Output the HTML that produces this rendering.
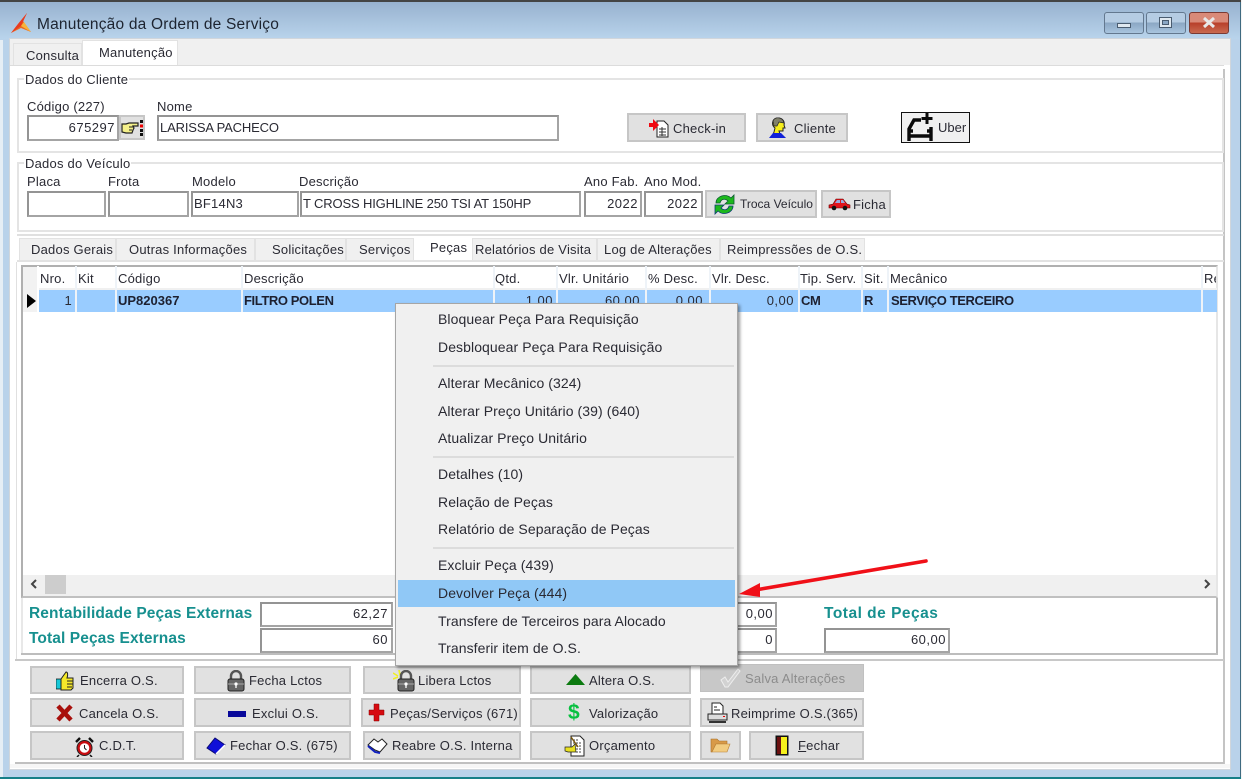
<!DOCTYPE html>
<html lang="pt"><head><meta charset="utf-8"><title>Manutenção da Ordem de Serviço</title>
<style>
html,body{margin:0;padding:0;width:1242px;height:779px;overflow:hidden;background:#fff}
#r{position:absolute;left:0;top:0;width:1242px;height:779px;overflow:hidden;font:13px/18px "Liberation Sans",sans-serif;color:#2a2a33;letter-spacing:.22px;filter:blur(.35px);background:#b9d2ea}
#r div,#r span,#r svg{position:absolute}
.t{white-space:nowrap}
.x{background:#e1e1e1;border:2px solid #c6c6c6;box-sizing:border-box}
.i{background:#fff;border:2px solid #949494;box-sizing:border-box;border-right-color:#a4a4a4;border-bottom-color:#a4a4a4}
.g{background:#fff;border:2px solid #e4e4e4;box-sizing:border-box}
.tb{background:#f0f0f0;border:1px solid #e2e2e2;border-bottom:0;box-sizing:border-box}
.h{background:#fff;width:2px;top:266px;height:46px}
#r .bd{font-weight:bold;letter-spacing:-.4px;color:#1d2030}
#r .tl{font-weight:bold;color:#17908f;font-size:15.5px;letter-spacing:.1px;line-height:16px}
#r .u{letter-spacing:-.15px}
#r .n{letter-spacing:.5px}
#r .m{left:438px;white-space:nowrap;font-size:14px;line-height:16px;letter-spacing:.08px}
.sep{left:433px;width:301px;height:2px;background:#dcdcdc}
</style></head><body><div id="r">

<div style="left:0;top:0;width:1242px;height:2px;background:#444"></div>
<div style="left:0;top:2px;width:1242px;height:37px;background:linear-gradient(#98b2cf,#b9d4ec)"></div>
<div style="left:0;top:40px;width:3px;height:737px;background:#e6eef5"></div>
<div style="left:1240px;top:2px;width:1px;height:775px;background:#3f6a80"></div>
<div style="left:1241px;top:0;width:1px;height:779px;background:#f4f4f4"></div>
<div style="left:0;top:777px;width:1241px;height:2px;background:#157f88"></div>
<div style="left:9px;top:38px;width:1222px;height:732px;background:#fff;border:1px solid #d0d6dc;box-sizing:border-box"></div>
<svg style="left:10px;top:12px" width="23" height="22" viewBox="0 0 23 22"><path d="M17 1 L13 9 L21 20 L11 16 L1 21 L8 12 Z" fill="#ee6a1c"/><path d="M17 1 L8 12 L1 21 L11 14 Z" fill="#e83a20"/><path d="M11 14 L21 20 L14 10Z" fill="#f6b43c"/></svg>
<span class="t" style="left:37px;top:16px;font-size:15.5px;color:#1d2430;letter-spacing:.2px">Manutenção da Ordem de Serviço</span>

<div style="left:1104px;top:12px;width:40px;height:22px;background:linear-gradient(#b5cce3 45%,#8ba7c4 50%,#a8c4de);border:1px solid #63788f;border-radius:3px;box-sizing:border-box"></div>
<div style="left:1117px;top:23px;width:14px;height:5px;background:#dfe8f0;border:1px solid #4a5c70;box-sizing:border-box"></div>
<div style="left:1146px;top:12px;width:40px;height:22px;background:linear-gradient(#b5cce3 45%,#8ba7c4 50%,#a8c4de);border:1px solid #63788f;border-radius:3px;box-sizing:border-box"></div>
<div style="left:1159px;top:17px;width:13px;height:11px;background:#dfe8f0;border:1px solid #4a5c70;box-sizing:border-box"></div>
<div style="left:1162px;top:20px;width:7px;height:5px;background:#8ba7c4;border:1px solid #4a5c70;box-sizing:border-box"></div>
<div style="left:1189px;top:12px;width:40px;height:22px;background:linear-gradient(#d98a78 45%,#b8402a 50%,#c96a50);border:1px solid #7a3a33;border-radius:3px;box-sizing:border-box"></div>
<svg style="left:1201px;top:15px" width="16" height="15" viewBox="0 0 16 15"><path d="M3 3 L13 12 M13 3 L3 12" stroke="#e8e8e8" stroke-width="3"/></svg>

<div style="left:10px;top:39px;width:1220px;height:26px;background:#f0f0f0"></div>
<div class="tb" style="left:13px;top:43px;width:69px;height:23px"></div>
<div style="left:82px;top:40px;width:96px;height:26px;background:#fff;border:1px solid #e2e2e2;border-bottom:0;box-sizing:border-box"></div>
<span class="t" style="left:26px;top:47px">Consulta</span>
<span class="t" style="left:99px;top:44px">Manutenção</span>
<div style="left:10px;top:65px;width:1214px;height:1px;background:#dcdcdc"></div>
<div style="left:1223px;top:69px;width:2px;height:696px;background:#c4c4c4"></div>
<div style="left:16px;top:262px;width:1px;height:398px;background:#e0e0e0"></div>

<div class="g" style="left:17px;top:78px;width:1207px;height:75px"></div>
<span class="t" style="left:24px;top:71px;background:#fff;padding:0 1px">Dados do Cliente</span>
<span class="t" style="left:27px;top:98px">Código (227)</span>
<span class="t" style="left:157px;top:98px">Nome</span>
<div class="i" style="left:27px;top:115px;width:92px;height:26px"></div>
<span class="t n" style="right:1127px;top:119px">675297</span>
<div class="x" style="left:119px;top:115px;width:26px;height:25px"></div>
<svg style="left:121px;top:117px" width="24" height="22" viewBox="0 0 24 22"><path d="M1 7 H5 L8 6 H17 V9 H12 L13 11 L12 13 L11 16 H5 L1 15 Z" fill="#f4f08a" stroke="#222" stroke-width="1.2"/><path d="M8 10h4M8 13h3" stroke="#222"/><path d="M19 3h3v3h-3zM19 12h3v3h-3zM19 16h3v3h-3z" fill="#111"/><path d="M19 7.500h3v3h-3z" fill="#e00"/></svg>
<div class="i" style="left:157px;top:115px;width:402px;height:26px"></div>
<span class="t u" style="left:160px;top:119px">LARISSA PACHECO</span>

<div class="x" style="left:627px;top:113px;width:119px;height:29px"></div>
<svg style="left:648px;top:117px" width="22" height="22" viewBox="0 0 22 22"><path d="M9 4h7l4 4v12H9z" fill="#fff" stroke="#222"/><path d="M11 12h7M11 15h7M11 18h7M14 10v9" stroke="#333"/><path d="M1 6h4V2l6 6-6 6v-4H1z" fill="#ef0a12"/></svg>
<span class="t" style="left:673px;top:120px">Check-in</span>
<div class="x" style="left:756px;top:113px;width:92px;height:29px"></div>
<svg style="left:768px;top:116px" width="20" height="23" viewBox="0 0 20 23"><path d="M4 21 L6 16 L7 12 C3 9 4 2 10 2 C15 2 17 6 16 9 L17 12 H15 V15 H11 L12 18 L16 21Z" fill="#f6ee1c" stroke="#222"/><path d="M1 22 L5 17 H13 L18 22Z" fill="#1020d8"/><path d="M5 5 C7 0 15 1 16 7 L11 6 L9 10 L6 10Z" fill="#80806a" stroke="#222" stroke-width=".7"/></svg>
<span class="t" style="left:794px;top:120px">Cliente</span>
<div style="left:901px;top:112px;width:69px;height:31px;background:#f0f0f0;border:1px solid #111;box-sizing:border-box"></div>
<svg style="left:904px;top:112px" width="32" height="31" viewBox="0 0 32 31"><path d="M23 1V12M17.500 6.500H28.500" stroke="#0a0a0a" stroke-width="3"/><path d="M17 8H10L5 17V29M5 24H27M27 15V29M5 19H9M27 19H23" stroke="#0a0a0a" stroke-width="3.4" fill="none"/></svg>
<span class="t" style="left:938px;top:119px;font-size:13px;letter-spacing:0">Uber</span>

<div class="g" style="left:17px;top:162px;width:1207px;height:70px"></div>
<span class="t" style="left:24px;top:155px;background:#fff;padding:0 1px">Dados do Veículo</span>
<span class="t" style="left:27px;top:173px">Placa</span>
<span class="t" style="left:108px;top:173px">Frota</span>
<span class="t" style="left:192px;top:173px">Modelo</span>
<span class="t" style="left:299px;top:173px">Descrição</span>
<span class="t" style="left:584px;top:173px">Ano Fab.</span>
<span class="t" style="left:644px;top:173px">Ano Mod.</span>
<div class="i" style="left:27px;top:191px;width:79px;height:26px"></div>
<div class="i" style="left:108px;top:191px;width:81px;height:26px"></div>
<div class="i" style="left:191px;top:191px;width:108px;height:26px"></div>
<div class="i" style="left:300px;top:191px;width:281px;height:26px"></div>
<div class="i" style="left:584px;top:191px;width:58px;height:26px"></div>
<div class="i" style="left:644px;top:191px;width:59px;height:26px"></div>
<span class="t" style="left:194px;top:195px">BF14N3</span>
<span class="t u" style="left:303px;top:195px">T CROSS HIGHLINE 250 TSI AT 150HP</span>
<span class="t n" style="right:604px;top:195px">2022</span>
<span class="t n" style="right:544px;top:195px">2022</span>
<div class="x" style="left:705px;top:190px;width:112px;height:28px"></div>
<svg style="left:713px;top:193px" width="23" height="23" viewBox="0 0 23 23"><path d="M3 10 C3 3 13 0 18 5 L21 2 V11 H12 L15 8 C12 5 8 6 7 10Z" fill="#1cb81c" stroke="#0a5a30" stroke-width=".8"/><path d="M20 13 C20 20 10 23 5 18 L2 21 V12 H11 L8 15 C11 18 15 17 16 13Z" fill="#1cb81c" stroke="#0a3a70" stroke-width=".8"/></svg>
<span class="t" style="left:740px;top:195px;font-size:12px;letter-spacing:0">Troca Veículo</span>
<div class="x" style="left:821px;top:190px;width:70px;height:28px"></div>
<svg style="left:828px;top:197px" width="23" height="14" viewBox="0 0 23 14"><path d="M1 11 V8 L5 7 L8 2 H15 L19 7 L22 8 V11Z" fill="#e0141c" stroke="#600" stroke-width=".6"/><path d="M9 3h3v3H7zM13 3h2l2 3h-4z" fill="#9ad"/><circle cx="6" cy="11" r="2.3" fill="#111"/><circle cx="17" cy="11" r="2.3" fill="#111"/></svg>
<span class="t" style="left:853px;top:196px">Ficha</span>

<div style="left:17px;top:234px;width:1207px;height:2px;background:#e0e0e0"></div>
<div class="tb" style="left:19px;top:238px;width:97px;height:23px"></div>
<div class="tb" style="left:116px;top:238px;width:139px;height:23px"></div>
<div class="tb" style="left:255px;top:238px;width:91px;height:23px"></div>
<div class="tb" style="left:346px;top:238px;width:68px;height:23px"></div>
<div class="tb" style="left:472px;top:238px;width:125px;height:23px"></div>
<div class="tb" style="left:597px;top:238px;width:123px;height:23px"></div>
<div class="tb" style="left:720px;top:238px;width:145px;height:23px"></div>
<span class="t" style="left:31px;top:241px">Dados Gerais</span>
<span class="t" style="left:129px;top:241px">Outras Informações</span>
<span class="t" style="left:272px;top:241px">Solicitações</span>
<span class="t" style="left:359px;top:241px">Serviços</span>
<span class="t" style="left:430px;top:239px">Peças</span>
<span class="t" style="left:475px;top:241px">Relatórios de Visita</span>
<span class="t" style="left:604px;top:241px">Log de Alterações</span>
<span class="t" style="left:727px;top:241px">Reimpressões de O.S.</span>
<div style="left:17px;top:260px;width:1207px;height:2px;background:#e2e2e2"></div>

<div style="left:21px;top:265px;width:1197px;height:333px;background:#fff;border:2px solid #b0b0b0;border-right-color:#e6e6e6;border-bottom-color:#c0c0c0;box-sizing:border-box"></div>
<div style="left:23px;top:267px;width:15px;height:45px;background:#f2f2f2"></div>
<div style="left:38px;top:290px;width:1179px;height:22px;background:#99ccff"></div>
<div style="left:38px;top:288px;width:1179px;height:2px;background:#f0f0f0"></div>
<div class="h" style="left:37px"></div><div class="h" style="left:75px;background:#eef3f8"></div><div class="h" style="left:115px;background:#eef3f8"></div><div class="h" style="left:241px;background:#eef3f8"></div><div class="h" style="left:493px;background:#eef3f8"></div><div class="h" style="left:556px;background:#eef3f8"></div><div class="h" style="left:645px;background:#eef3f8"></div><div class="h" style="left:709px;background:#eef3f8"></div><div class="h" style="left:798px;background:#eef3f8"></div><div class="h" style="left:861px;background:#eef3f8"></div><div class="h" style="left:887px;background:#eef3f8"></div><div class="h" style="left:1201px;background:#eef3f8"></div>
<span class="t" style="left:40px;top:270px">Nro.</span>
<span class="t" style="left:78px;top:270px">Kit</span>
<span class="t" style="left:118px;top:270px">Código</span>
<span class="t" style="left:244px;top:270px">Descrição</span>
<span class="t" style="left:495px;top:270px">Qtd.</span>
<span class="t" style="left:559px;top:270px">Vlr. Unitário</span>
<span class="t" style="left:648px;top:270px">% Desc.</span>
<span class="t" style="left:712px;top:270px">Vlr. Desc.</span>
<span class="t" style="left:800px;top:270px">Tip. Serv.</span>
<span class="t" style="left:864px;top:270px">Sit.</span>
<span class="t" style="left:890px;top:270px">Mecânico</span>
<span class="t" style="left:1204px;top:270px;width:12px;overflow:hidden">Re</span>
<svg style="left:26px;top:293px" width="11" height="16"><path d="M1 1 L10 8 L1 15Z" fill="#000"/></svg>
<span class="t" style="right:1170px;top:292px">1</span>
<span class="t bd" style="left:118px;top:292px;letter-spacing:0">UP820367</span>
<span class="t bd" style="left:244px;top:292px">FILTRO POLEN</span>
<span class="t n" style="right:689px;top:292px">1,00</span>
<span class="t n" style="right:602px;top:292px">60,00</span>
<span class="t n" style="right:539px;top:292px">0,00</span>
<span class="t n" style="right:448px;top:292px">0,00</span>
<span class="t bd" style="left:801px;top:292px">CM</span>
<span class="t bd" style="left:864px;top:292px">R</span>
<span class="t bd" style="left:891px;top:292px">SERVIÇO TERCEIRO</span>

<div style="left:23px;top:575px;width:1193px;height:21px;background:#f0f0f0"></div>
<div style="left:45px;top:575px;width:21px;height:19px;background:#cdcdcd"></div>
<svg style="left:29px;top:578px" width="10" height="12"><path d="M7 2 L3 6 L7 10" fill="none" stroke="#444" stroke-width="2"/></svg>
<svg style="left:1202px;top:578px" width="10" height="12"><path d="M3 2 L7 6 L3 10" fill="none" stroke="#444" stroke-width="2"/></svg>

<div style="left:21px;top:598px;width:2px;height:56px;background:#e8e8e8"></div>
<div style="left:1216px;top:598px;width:2px;height:56px;background:#b8b8b8"></div>
<div style="left:21px;top:653px;width:1197px;height:2px;background:#bdbdbd"></div>
<span class="t tl" style="left:29px;top:606px">Rentabilidade Peças Externas</span>
<span class="t tl" style="left:29px;top:631px">Total Peças Externas</span>
<span class="t tl" style="left:824px;top:606px;letter-spacing:.5px">Total de Peças</span>
<div class="i" style="left:260px;top:602px;width:133px;height:25px"></div>
<span class="t n" style="right:854px;top:605px">62,27</span>
<div class="i" style="left:260px;top:628px;width:133px;height:25px"></div>
<span class="t n" style="right:854px;top:631px">60</span>
<div class="i" style="left:690px;top:602px;width:87px;height:25px"></div>
<span class="t n" style="right:469px;top:605px">0,00</span>
<div class="i" style="left:690px;top:628px;width:87px;height:25px"></div>
<span class="t n" style="right:469px;top:631px">0</span>
<div class="i" style="left:824px;top:628px;width:126px;height:25px"></div>
<span class="t n" style="right:296px;top:631px">60,00</span>

<div style="left:15px;top:659px;width:1209px;height:2px;background:#c8c8c8"></div>
<div style="left:15px;top:762px;width:1209px;height:2px;background:#c0c0c0"></div>
<div style="left:10px;top:764px;width:1220px;height:4px;background:#f6f6f6"></div>

<div class="x" style="left:30px;top:666px;width:154px;height:28px"></div>
<div class="x" style="left:30px;top:698px;width:154px;height:29px"></div>
<div class="x" style="left:30px;top:731px;width:154px;height:29px"></div>
<div class="x" style="left:194px;top:666px;width:157px;height:28px"></div>
<div class="x" style="left:194px;top:698px;width:157px;height:29px"></div>
<div class="x" style="left:194px;top:731px;width:157px;height:29px"></div>
<div class="x" style="left:363px;top:666px;width:158px;height:28px"></div>
<div class="x" style="left:361px;top:698px;width:160px;height:29px"></div>
<div class="x" style="left:363px;top:731px;width:158px;height:29px"></div>
<div class="x" style="left:530px;top:666px;width:161px;height:28px"></div>
<div class="x" style="left:530px;top:698px;width:161px;height:29px"></div>
<div class="x" style="left:530px;top:731px;width:161px;height:29px"></div>
<div style="left:700px;top:664px;width:164px;height:28px;background:#c8c8c8;border:1px solid #c0c0c0;box-sizing:border-box"></div>
<div class="x" style="left:700px;top:698px;width:164px;height:29px"></div>
<div class="x" style="left:700px;top:731px;width:41px;height:29px"></div>
<div class="x" style="left:749px;top:731px;width:115px;height:29px"></div>

<svg style="left:56px;top:671px" width="18" height="20" viewBox="0 0 18 20"><path d="M0 8h5v10H0z" fill="#16c8d8" stroke="#111" stroke-width=".7"/><path d="M5 8 L10 1 C12 1 12 4 11 7 H17 V17 L15 19 H5Z" fill="#f4e82a" stroke="#222"/><path d="M11 10h6M11 13h6M11 16h5" stroke="#222"/></svg>
<span class="t" style="left:80px;top:672px">Encerra O.S.</span>
<svg style="left:227px;top:670px" width="18" height="22" viewBox="0 0 18 22"><path d="M4 10V6a5 5 0 0 1 10 0v4" fill="none" stroke="#555" stroke-width="2.4"/><rect x="1" y="9" width="16" height="12" rx="2" fill="#666" stroke="#222"/><path d="M1 14h16" stroke="#aaa"/><circle cx="9" cy="14" r="1.6" fill="#fff"/><path d="M9 14v4" stroke="#fff" stroke-width="1.3"/></svg>
<span class="t" style="left:249px;top:672px">Fecha Lctos</span>
<svg style="left:393px;top:670px" width="23" height="22" viewBox="0 0 23 22"><path d="M0 3l5 3M6 0l1 5M0 9l5-2" stroke="#f0f020" stroke-width="1.6"/><path d="M8 9V6a5 5 0 0 1 10 0v4" fill="none" stroke="#555" stroke-width="2.4"/><rect x="5" y="9" width="16" height="12" rx="2" fill="#666" stroke="#222"/><path d="M5 14h16" stroke="#aaa"/><circle cx="13" cy="14" r="1.6" fill="#fff"/><path d="M13 14v4" stroke="#fff" stroke-width="1.3"/></svg>
<span class="t" style="left:418px;top:672px">Libera Lctos</span>
<svg style="left:566px;top:674px" width="19" height="11"><path d="M0 11L9.500 0L19 11Z" fill="#0c7a10"/></svg>
<span class="t" style="left:589px;top:672px">Altera O.S.</span>
<svg style="left:719px;top:667px" width="22" height="22" viewBox="0 0 22 22"><path d="M2 13l4-3 3 5L19 2l2 2L9 20 6 20Z" fill="#d2d2d2" stroke="#eeeeee"/></svg>
<span class="t" style="left:745px;top:670px;color:#8c8c8c">Salva Alterações</span>

<svg style="left:56px;top:704px" width="17" height="18" viewBox="0 0 17 18"><path d="M2 2L15 16M15 2L2 16" stroke="#a8100c" stroke-width="4.500"/></svg>
<span class="t" style="left:79px;top:705px">Cancela O.S.</span>
<div style="left:228px;top:711px;width:18px;height:6px;background:#08089a"></div>
<span class="t" style="left:252px;top:705px">Exclui O.S.</span>
<svg style="left:368px;top:703px" width="17" height="19"><path d="M6 1h5v6h5v5h-5v6H6v-6H1V7h5z" fill="#d60a10" stroke="#800" stroke-width=".5"/></svg>
<span class="t" style="left:390px;top:705px">Peças/Serviços (671)</span>
<span class="t" style="left:568px;top:702px;font:bold 21px/22px 'Liberation Sans',sans-serif;color:#08c040">$</span>
<span class="t" style="left:589px;top:705px">Valorização</span>
<svg style="left:707px;top:702px" width="21" height="22" viewBox="0 0 21 22"><path d="M5 1h8l3 3v8H5z" fill="#fff" stroke="#222"/><path d="M7 5h3M7 8h6" stroke="#222"/><path d="M1 12h19v6H1z" fill="#ddd" stroke="#222"/><path d="M2 19h17v2H2z" fill="#333"/><path d="M16 14h2v1h-2z" fill="#e00"/></svg>
<span class="t" style="left:731px;top:705px">Reimprime O.S.(365)</span>

<svg style="left:75px;top:737px" width="19" height="20" viewBox="0 0 19 20"><circle cx="9.500" cy="11" r="7.500" fill="#c80c10" stroke="#222"/><circle cx="9.500" cy="11" r="4.800" fill="#fff"/><path d="M9.500 8v3l2 2" stroke="#222" fill="none"/><path d="M1 5l4-4M18 5l-4-4" stroke="#111" stroke-width="2.400"/><path d="M4 18l-2 2M15 18l2 2" stroke="#111" stroke-width="1.500"/></svg>
<span class="t" style="left:99px;top:737px">C.D.T.</span>
<svg style="left:206px;top:737px" width="20" height="18" viewBox="0 0 20 18"><path d="M9 1L19 8 10 17 1 11Z" fill="#1010d8" stroke="#0a0a70"/><path d="M10 17l9-9" stroke="#fff" stroke-width="1.500"/></svg>
<span class="t" style="left:230px;top:737px">Fechar O.S. (675)</span>
<svg style="left:367px;top:737px" width="21" height="18" viewBox="0 0 21 18"><path d="M1 8L7 2 L11 5 L15 2 L20 7 L13 15 L8 13Z" fill="#fff" stroke="#222"/><path d="M1 9L8 15 L13 16" stroke="#1020c0" stroke-width="2" fill="none"/></svg>
<span class="t" style="left:392px;top:737px">Reabre O.S. Interna</span>
<svg style="left:564px;top:735px" width="22" height="22" viewBox="0 0 22 22"><path d="M7 1h9l4 4v16H7z" fill="#fff" stroke="#222"/><path d="M9 5h6M9 8h9M12 11h6M12 14h6M12 17h6" stroke="#444" stroke-dasharray="2 1"/><path d="M1 12h7l3-3 1 8H4l-3-1z" fill="#e8e020" stroke="#222" stroke-width=".7"/><path d="M7 2l7 10" stroke="#7a5a10" stroke-width="1.500"/></svg>
<span class="t" style="left:589px;top:737px">Orçamento</span>
<svg style="left:710px;top:737px" width="21" height="16" viewBox="0 0 21 16"><path d="M1 15V2h6l2 2h8v3H6L2 15z" fill="#d89a48" stroke="#a87028" stroke-width=".6"/><path d="M2 15L6 7H20L17 15Z" fill="#f2cc80" stroke="#b88038" stroke-width=".6"/></svg>
<svg style="left:775px;top:735px" width="14" height="21"><rect x=".5" y=".5" width="13" height="20" fill="#111"/><rect x="2" y="2" width="4" height="17" fill="#6a1010"/><rect x="6" y="2" width="6" height="17" fill="#f6f01c"/></svg>
<span class="t" style="left:798px;top:737px"><u>F</u>echar</span>

<div style="left:395px;top:303px;width:343px;height:363px;background:#f0f0f0;border:1px solid #a6a6a6;box-sizing:border-box;box-shadow:2px 2px 3px rgba(0,0,0,.4)"></div>
<div style="left:398px;top:580px;width:337px;height:27px;background:#90c8f6"></div>
<span class="t m" style="top:311px">Bloquear Peça Para Requisição</span>
<span class="t m" style="top:339px">Desbloquear Peça Para Requisição</span>
<div class="sep" style="top:365px"></div>
<span class="t m" style="top:375px">Alterar Mecânico (324)</span>
<span class="t m" style="top:403px">Alterar Preço Unitário (39) (640)</span>
<span class="t m" style="top:430px">Atualizar Preço Unitário</span>
<div class="sep" style="top:456px"></div>
<span class="t m" style="top:466px">Detalhes (10)</span>
<span class="t m" style="top:494px">Relação de Peças</span>
<span class="t m" style="top:521px">Relatório de Separação de Peças</span>
<div class="sep" style="top:547px"></div>
<span class="t m" style="top:557px">Excluir Peça (439)</span>
<span class="t m" style="top:585px">Devolver Peça (444)</span>
<span class="t m" style="top:613px">Transfere de Terceiros para Alocado</span>
<span class="t m" style="top:640px">Transferir item de O.S.</span>

<svg style="left:730px;top:552px" width="205" height="50" viewBox="730 552 205 50"><path d="M926 561 L755 590" stroke="#f01018" stroke-width="3.600" stroke-linecap="round"/><path d="M739 594 L760 583 L760 597 Z" fill="#f01018"/></svg>
</div></body></html>
